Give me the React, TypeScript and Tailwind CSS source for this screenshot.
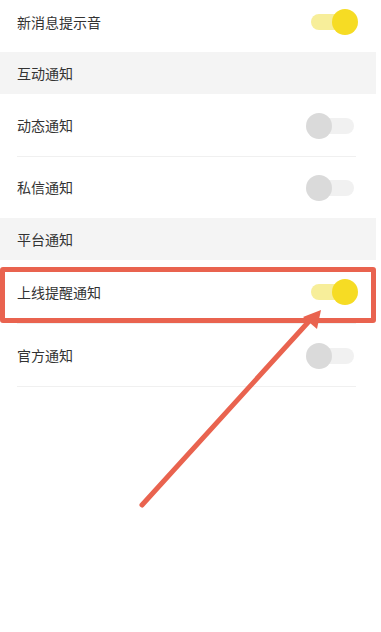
import React from 'react';

type Row = { label: string; on: boolean; divider?: boolean };

// Toggle switch: thin track with a large round thumb
const Toggle: React.FC<{ on: boolean }> = ({ on }) => (
  <div className="relative w-[52px] h-[26px] flex items-center">
    <div
      className={
        on
          ? 'absolute left-[5px] right-[6px] h-[16px] rounded-full bg-[#f7ee9a]'
          : 'absolute left-[5px] right-[4px] h-[16px] rounded-full bg-[#f1f1f1]'
      }
    />
    <div
      className={
        on
          ? 'absolute right-0 w-[26px] h-[26px] rounded-full bg-[#f6dc24]'
          : 'absolute left-0 w-[26px] h-[26px] rounded-full bg-[#dadada]'
      }
    />
  </div>
);

const SettingRow: React.FC<Row & { height: string }> = ({ label, on, divider, height }) => (
  <div className={`relative flex items-center justify-between pl-[17px] pr-[18px] ${height}`}>
    <span className="text-[14px] text-[#333333]">{label}</span>
    <Toggle on={on} />
    {divider && <div className="absolute bottom-0 left-[17px] right-[20px] h-px bg-[#f0f0f0]" />}
  </div>
);

const SectionHeader: React.FC<{ title: string }> = ({ title }) => (
  <div className="h-[42px] flex items-center pl-[17px] bg-[#f4f4f4]">
    <span className="text-[14px] text-[#333333]">{title}</span>
  </div>
);

export default function App() {
  return (
    <div
      className="relative w-[381px] h-[632px] bg-white overflow-hidden"
      style={{ fontFamily: '"Noto Sans CJK SC", "Noto Sans", sans-serif' }}
    >
      <div className="w-[376px]">
        <SettingRow label="新消息提示音" on height="h-[52px] pb-[8px]" />
        <SectionHeader title="互动通知" />
        <SettingRow label="动态通知" on={false} divider height="h-[63px]" />
        <SettingRow label="私信通知" on={false} height="h-[61px]" />
        <SectionHeader title="平台通知" />
        <SettingRow label="上线提醒通知" on divider height="h-[64px]" />
        <SettingRow label="官方通知" on={false} divider height="h-[63px]" />
      </div>

      {/* annotation: red highlight box */}
      <div className="absolute left-0 top-[267px] w-[376px] h-[56px] border-[5px] border-[#e9634f] rounded-[3px]" />

      {/* annotation: arrow */}
      <svg className="absolute left-0 top-0" width="381" height="632" viewBox="0 0 381 632">
        <line x1="142" y1="505" x2="312" y2="318" stroke="#e9634f" strokeWidth="5" strokeLinecap="round" />
        <polygon points="321,310 303,317 317,329" fill="#e9634f" />
      </svg>
    </div>
  );
}
